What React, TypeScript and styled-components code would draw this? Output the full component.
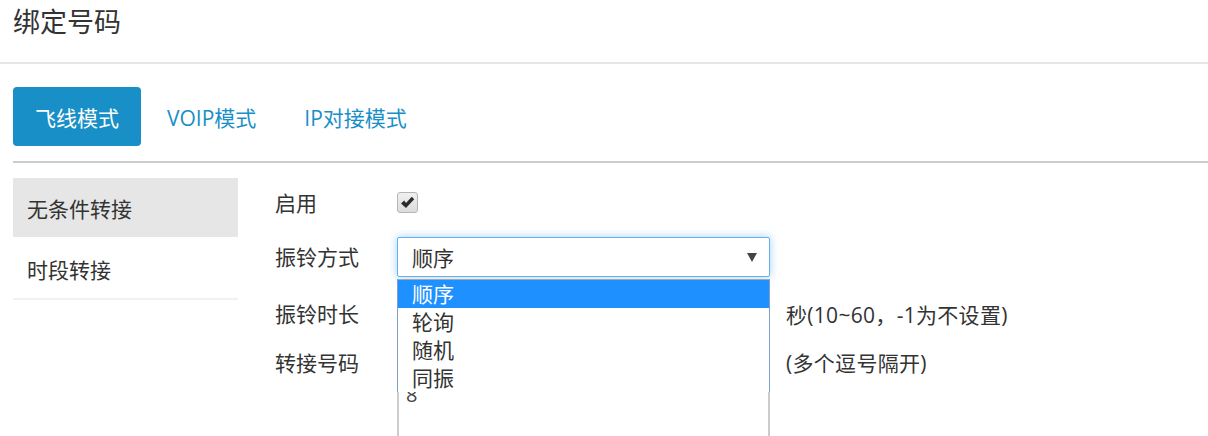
import React, { useState } from 'react';
import styled, { createGlobalStyle } from 'styled-components';

const GlobalStyle = createGlobalStyle`
  html, body {
    margin: 0;
    padding: 0;
    background: #fff;
    overflow: hidden;
  }
  body {
    font-family: "Open Sans", "Noto Sans CJK SC", sans-serif;
    color: #333;
  }
`;

const Page = styled.div`
  width: 1208px;
  height: 436px;
  overflow: hidden;
`;

const Header = styled.div`
  height: 64px;
  box-sizing: border-box;
  padding: 4px 0 0 13px;
  border-bottom: 2px solid #e6e6e6;
`;

const Title = styled.h1`
  margin: 0;
  font-size: 27px;
  font-weight: normal;
  line-height: 36px;
  color: #333;
`;

const TabBar = styled.div`
  display: flex;
  gap: 4px;
  margin-left: 13px;
  padding: 23px 0 15px;
  border-bottom: 2px solid #ccc;
`;

const Tab = styled.button<{ $active?: boolean }>`
  height: 59px;
  padding: 0 22px;
  border: none;
  border-radius: 4px;
  font-family: inherit;
  font-size: 21px;
  cursor: pointer;
  background: ${p => (p.$active ? '#188fc6' : 'transparent')};
  color: ${p => (p.$active ? '#fff' : '#188fc6')};
`;

const Body = styled.div`
  display: flex;
  gap: 37px;
  margin: 15px 0 0 13px;
`;

const SideNav = styled.ul`
  width: 225px;
  margin: 0;
  padding: 0;
  list-style: none;
`;

const NavItem = styled.li<{ $active?: boolean }>`
  height: 61px;
  box-sizing: border-box;
  padding-left: 14px;
  display: flex;
  align-items: center;
  font-size: 21px;
  color: #333;
  background: ${p => (p.$active ? '#e6e6e6' : '#fff')};
  border-bottom: 2px solid ${p => (p.$active ? '#fff' : '#f2f2f2')};
`;

const Form = styled.div`
  display: flex;
  flex-direction: column;
`;

const Row = styled.div<{ $height: number; $gap?: number }>`
  display: flex;
  align-items: center;
  height: ${p => p.$height}px;
  margin-bottom: ${p => p.$gap ?? 0}px;
`;

const TopRow = styled(Row)`
  align-items: flex-start;
`;

const Label = styled.span`
  width: 122px;
  flex: none;
  font-size: 21px;
  line-height: 40px;
  color: #333;
`;

const CheckBox = styled.span`
  width: 19px;
  height: 19px;
  border: 1px solid #b5b5b5;
  border-radius: 3px;
  background: linear-gradient(#f0f0f0, #dcdcdc);
  display: flex;
  align-items: center;
  justify-content: center;
  margin-top: -2px;
`;

const Field = styled.div`
  position: relative;
  width: 373px;
  height: 40px;
  flex: none;
`;

const SelectBox = styled.div`
  height: 40px;
  box-sizing: border-box;
  border: 1px solid #66afe9;
  border-radius: 2px;
  box-shadow: 0 0 8px rgba(102, 175, 233, 0.6);
  padding: 0 14px;
  display: flex;
  align-items: center;
  justify-content: space-between;
  font-size: 21px;
  background: #fff;
`;

const Arrow = styled.span`
  width: 0;
  height: 0;
  border-left: 5px solid transparent;
  border-right: 5px solid transparent;
  border-top: 9px solid #444;
  margin-right: -2px;
`;

const OptionList = styled.ul`
  position: absolute;
  z-index: 2;
  top: 42px;
  left: 0;
  width: 373px;
  box-sizing: border-box;
  margin: 0;
  padding: 0;
  list-style: none;
  background: #fff;
  border: 1px solid #7e9fc9;
  border-top-color: #a9a9a9;
  border-bottom: none;
`;

const Option = styled.li<{ $selected?: boolean }>`
  height: 28px;
  line-height: 28px;
  padding-left: 14px;
  font-size: 21px;
  color: ${p => (p.$selected ? '#fff' : '#333')};
  background: ${p => (p.$selected ? '#1e90ff' : '#fff')};
`;

const Input = styled.div`
  width: 373px;
  height: 40px;
  box-sizing: border-box;
  border: 1px solid #ccc;
  border-radius: 2px;
  flex: none;
`;

const TextArea = styled.div`
  width: 373px;
  height: 120px;
  box-sizing: border-box;
  border: 2px solid #ccc;
  border-top-width: 1px;
  padding: 40px 0 0 7px;
  font-size: 20px;
  line-height: 22px;
  color: #444;
  flex: none;
`;

const Hint = styled.span`
  margin-left: 16px;
  font-size: 21px;
  letter-spacing: 0.3px;
  color: #333;
`;

const TopHint = styled(Hint)`
  line-height: 40px;
`;

const options = ['顺序', '轮询', '随机', '同振'];

export default function App() {
  const [tab, setTab] = useState(0);
  const tabs = ['飞线模式', 'VOIP模式', 'IP对接模式'];

  return (
    <Page>
      <GlobalStyle />
      <Header>
        <Title>绑定号码</Title>
      </Header>
      <TabBar>
        {tabs.map((t, i) => (
          <Tab key={t} $active={i === tab} onClick={() => setTab(i)}>
            {t}
          </Tab>
        ))}
      </TabBar>
      <Body>
        <SideNav>
          <NavItem $active>无条件转接</NavItem>
          <NavItem>时段转接</NavItem>
        </SideNav>
        <Form>
          <Row $height={50} $gap={9}>
            <Label>启用</Label>
            <CheckBox>
              <svg width="15" height="13" viewBox="0 0 15 13">
                <path d="M1 7.5 L4.2 4.6 L6 7 L11.8 0.8 L14.2 3.3 L6 12 Z" fill="#2b2b2b" />
              </svg>
            </CheckBox>
          </Row>
          <Row $height={40} $gap={17}>
            <Label>振铃方式</Label>
            <Field>
              <SelectBox>
                <span>顺序</span>
                <Arrow />
              </SelectBox>
              <OptionList>
                {options.map((o, i) => (
                  <Option key={o} $selected={i === 0}>
                    {o}
                  </Option>
                ))}
              </OptionList>
            </Field>
          </Row>
          <Row $height={40} $gap={9}>
            <Label>振铃时长</Label>
            <Input />
            <Hint>秒(10~60，-1为不设置)</Hint>
          </Row>
          <TopRow $height={120}>
            <Label>转接号码</Label>
            <TextArea>8</TextArea>
            <TopHint>(多个逗号隔开)</TopHint>
          </TopRow>
        </Form>
      </Body>
    </Page>
  );
}
